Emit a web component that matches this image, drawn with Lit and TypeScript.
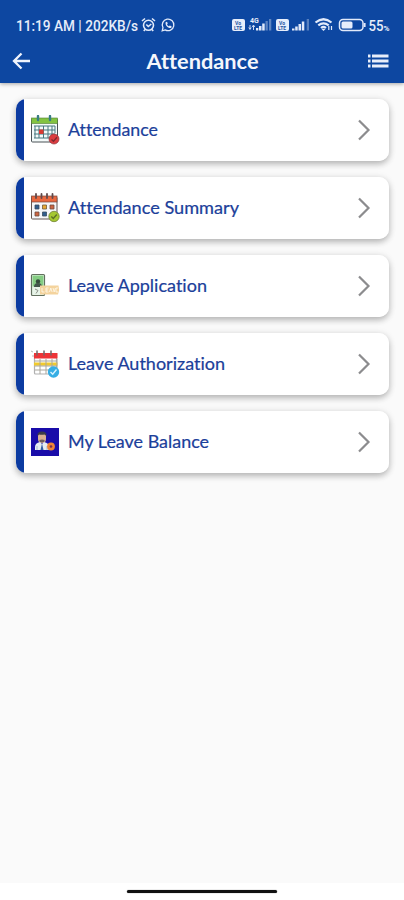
import { LitElement, html, svg, css } from "lit";
import { customElement, property } from "lit/decorators.js";

const icons: Record<string, unknown> = {
  calendar: svg`
    <rect x="1.5" y="4" width="26" height="23" rx="1" fill="#f4fafa" stroke="#4b5257" stroke-width="1"/>
    <rect x="1.5" y="3" width="26" height="5.5" fill="#83c341" stroke="#4f7d33" stroke-width=".6"/>
    <path d="M8 1v4M20 1v4" stroke="#397d83" stroke-width="2.4" stroke-linecap="round"/>
    <path d="M4 11h21M4 15h21M4 19h21M4 23h16M5 11v12M9 11v12M13.500 11v12M18 11v12M22 11v9M25 11v7" stroke="#47777e" stroke-width="1"/>
    <rect x="9" y="14.500" width="4.500" height="4.500" fill="#d93a32"/>
    <circle cx="24" cy="24" r="5" fill="#dc3c40" stroke="#8c343a" stroke-width=".7"/>
    <path d="M21.500 24.500l2 1.800 3.500-4" fill="none" stroke="#7d292e" stroke-width="1.300"/>`,
  summary: svg`
    <rect x="1.500" y="4" width="25.500" height="22" rx="1" fill="#f6f7f9" stroke="#655752" stroke-width="1"/>
    <rect x="1.500" y="3" width="25.500" height="6" fill="#e9683f" stroke="#74483c" stroke-width=".7"/>
    <path d="M6 1v4M11.500 1v4M17 1v4M22.500 1v4" stroke="#62494a" stroke-width="1.800" stroke-linecap="round"/>
    <path d="M5 12h4v4H5zM12.500 19h4v4h-4z" fill="#315e8d" stroke="#3b4d60" stroke-width=".8"/>
    <path d="M12.500 12h4v4h-4z" fill="#e8aa35" stroke="#6f5b3b" stroke-width=".8"/>
    <path d="M5 19h4v4H5zM20 12h4v4h-4z" fill="#cc6542" stroke="#704b40" stroke-width=".8"/>
    <circle cx="24" cy="23.500" r="5.200" fill="#a6c832" stroke="#748438" stroke-width=".8"/>
    <path d="M21.300 23.500l2 2 3.500-4" fill="none" stroke="#5d7028" stroke-width="1.400"/>`,
  application: svg`
    <rect x="1.500" y="3.500" width="13" height="21" rx="1" fill="#e7f4e8" stroke="#62705f" stroke-width="1.200"/>
    <rect x="2.500" y="4.500" width="11" height="11" fill="#85cd83"/>
    <circle cx="8" cy="10.500" r="2.200" fill="#344b3c"/>
    <path d="M4 16q0-4 4-4t4 4z" fill="#42564b"/>
    <path d="M5 18l3 1.500-2 3" fill="none" stroke="#8b9088" stroke-width="1"/>
    <path d="M10 14.500h18.500q1.500 4.500-.5 9H10z" fill="#f4d39d"/>
    <path d="M12 17v4h2.500M18.500 17H16v4h2.500M16 19h2M19.500 21l1.300-4 1.300 4M23 17l1.200 4 1.200-4M28 17h-2v4h2" fill="none" stroke="#fff7e7" stroke-width=".9"/>`,
  authorization: svg`
    <path d="M4.500 5v19q0 1 1 1h21V5" fill="#fff" stroke="#b1b1b1" stroke-width="1.200"/>
    <path d="M4 4h23.500v5.500H4z" fill="#ed3437"/>
    <path d="M4 13.500h23.500v3.200H4z" fill="#f1ca2d"/>
    <path d="M10 10v15M16 10v15M22 10v10M27 10v9M5 12h22M5 17h22M5 21h15" stroke="#aaa79e" stroke-width="1"/>
    <path d="M7 1.500v5M14 1.500v5M21 1.500v5" stroke="#706868" stroke-width="1.500"/>
    <path d="M1 2l2 1M2 7h2" stroke="#b6b6b6"/>
    <circle cx="23.500" cy="23" r="5.700" fill="#36aee4"/>
    <path d="M20.500 23l2.200 2.200 3.800-4.700" fill="none" stroke="#d8f3ff" stroke-width="1.400"/>`,
  balance: svg`
    <rect x="1" y="1" width="28" height="28" fill="#190ca9"/>
    <path d="M8 9q0-3 4-3t4 3v3q0 4-4 4t-4-4z" fill="#d9b193"/>
    <path d="M7.500 9q-.5-4.500 4.500-4.500T16.500 9l-2-1.500q-3 .5-5.500 0z" fill="#3c3d4a"/>
    <path d="M9.500 13q2.500-1 5 0v1.500q-2.500 2-5 0z" fill="#6d5e5c"/>
    <path d="M5 23v-3q0-4 5-5l2 2 2-2q5 1 5 5v3z" fill="#e7edf2"/>
    <path d="M12 16.500l1.500 6.500h-3z" fill="#315ea5"/>
    <path d="M7 19v4M17 19v4" stroke="#98aec6" stroke-width=".8"/>
    <circle cx="21" cy="19.500" r="3.900" fill="#ef8437"/>
    <circle cx="21" cy="19.500" r="1.300" fill="#76315a"/>`,
};

@customElement("status-bar")
class StatusBar extends LitElement {
  static styles = css`
    :host { display: block; height: 39px; }
    svg { display: block; }
    text { font-family: Roboto, sans-serif; fill: #e7edfa; }
    .clock { font-size: 14.5px; font-weight: 500; }
    .tiny { font-size: 7px; font-weight: 700; }
    .sim { font-size: 5px; font-weight: 700; fill: #2855a2; }
  `;
  render() {
    return html`<svg width="404" height="39" viewBox="0 0 404 39" fill="none" stroke="#e2eafa">
      <g stroke="none">
        <text class="clock" x="16" y="30.500" textLength="122" lengthAdjust="spacingAndGlyphs">11:19 AM | 202KB/s</text>
      </g>
      <circle cx="148.500" cy="25.300" r="5" stroke-width="1.600"/>
      <path d="M142 21l3-2.500M155 21l-3-2.500M146.300 24.500l2 2 3-2.500M145 29.500l-1.200 1.500M152 29.500l1.200 1.500" stroke-width="1.600"/>
      <path d="M162.200 30.800l.8-3.100a5.800 5.800 0 1 1 2.200 2.200z" stroke-width="1.300"/>
      <path d="M165.600 22.300c-.5 3.500 2.400 6.300 5.600 5.700l.4-1.700-1.800-.9-1 .9q-1.300-.6-1.800-2l.8-.9-.8-1.600z" fill="#e2eafa" stroke="none"/>
      ${[232, 276].map((x) => svg`
        <rect x="${x}" y="19" width="13" height="12" rx="2" fill="#e7eefb" stroke="none"/>
        <text class="sim" x="${x + 3}" y="24.500" stroke="none">Vo</text>
        <text class="sim" x="${x + 2}" y="29.500" stroke="none">LTE</text>`)}
      <text class="tiny" x="250" y="23" stroke="none">4G</text>
      <path d="M250 25v4M248.800 27.500l1.200 2 1.200-2M253.500 30v-4M252.300 27l1.200-2 1.200 2" stroke-width=".9"/>
      <g stroke="none" fill="#e2eafa">
        <path d="M256 28h2.300v2.500H256zM259 26h2.500v4.500H259zM262.200 23.500h2.500v7h-2.500z"/>
        <path d="M265.500 21h2.300v9.500h-2.300zM269 19h2.300v11.500H269z" opacity=".38"/>
        <path d="M292 28.500h2.500v2H292zM295.200 26.500h2.500v4h-2.500zM298.500 24h2.500v6.500h-2.500zM301.800 21.500h2.500v9h-2.500z"/>
        <path d="M306.700 19h2.300v11.500h-2.300z" opacity=".35"/>
      </g>
      <path d="M315.500 22.500q8-6.500 16 0M318.300 25.400q5.200-4.200 10.400 0M321 28q2.500-2 5 0" stroke-width="2.200"/>
      <path d="M323.500 31l-2-2h4z" fill="#e2eafa" stroke="none"/>
      <path d="M328.800 26v4M331.500 30v-4" stroke-width="1.200"/>
      <rect x="339.500" y="19.500" width="23.500" height="11" rx="3.500" stroke-width="1.500"/>
      <rect x="341.500" y="21.500" width="11" height="7" rx="1.500" fill="#e7eefb" stroke="none"/>
      <path d="M364.700 23v4" stroke-width="1.800"/>
      <g stroke="none">
        <text class="clock" x="368.500" y="30.500" textLength="15" lengthAdjust="spacingAndGlyphs">55</text>
        <text class="tiny" x="383.500" y="30.500" textLength="6" lengthAdjust="spacingAndGlyphs">%</text>
      </g>
    </svg>`;
  }
}

@customElement("menu-card")
class MenuCard extends LitElement {
  @property() label = "";
  @property() icon = "";
  @property({ type: Number }) labelWidth = 100;
  static styles = css`
    :host {
      display: flex; align-items: center; box-sizing: border-box; height: 62px;
      padding: 0 17px 0 14px; border-radius: 10px;
      background: linear-gradient(to right, #0c3ba1 8px, #fff 8px);
      box-shadow: 0 3px 6px rgba(0,0,0,.24), 0 1px 8px rgba(0,0,0,.09);
    }
    .icon { width: 30px; height: 30px; flex: none; }
    .label { flex: 1; min-width: 0; height: 30px; margin-left: 8px; overflow: visible; }
    text { font: 400 16.5px Lato, "Open Sans", sans-serif; font-variant-ligatures: none; fill: #1c409a; stroke: #1c409a; stroke-width: .2px; }
    .arrow { width: 16px; height: 24px; flex: none; }
  `;
  render() {
    return html`
      <svg class="icon" viewBox="0 0 30 30">${icons[this.icon]}</svg>
      <svg class="label"><text x="0" y="20.500" textLength="${this.labelWidth}" lengthAdjust="spacingAndGlyphs">${this.label}</text></svg>
      <svg class="arrow" viewBox="0 0 16 24"><path d="M3 2.500l9.500 9.500L3 21.500" fill="none" stroke="#8c8c8e" stroke-width="2.200"/></svg>`;
  }
}

@customElement("app-root")
class AppRoot extends LitElement {
  static styles = css`
    :host { display: flex; flex-direction: column; height: 900px; background: #fafafa; }
    header { height: 83px; background: #0d47a1; box-shadow: 0 1px 4px rgba(0,0,0,.35); }
    .bar { display: grid; grid-template-columns: 40px 1fr 40px; align-items: center; height: 44px; }
    .bar svg { display: block; width: 100%; height: 44px; }
    .title { font: 700 21.5px Lato, sans-serif; font-variant-ligatures: none; fill: #f5f7fc; }
    main { flex: 1; display: flex; flex-direction: column; gap: 16px; padding: 16px 15px 0 16px; }
    footer { height: 17px; background: #fff; display: flex; justify-content: center; align-items: center; }
    .handle { width: 150px; height: 3px; border-radius: 2px; background: #111; box-shadow: 0 0 1px #555; }
  `;
  private items = [
    { label: "Attendance", icon: "calendar", width: 90 },
    { label: "Attendance Summary", icon: "summary", width: 171 },
    { label: "Leave Application", icon: "application", width: 139 },
    { label: "Leave Authorization", icon: "authorization", width: 157 },
    { label: "My Leave Balance", icon: "balance", width: 141 },
  ];
  render() {
    return html`
      <header>
        <status-bar></status-bar>
        <div class="bar">
          <svg viewBox="0 0 40 44"><path d="M30 22H14M21.500 14.500L14 22l7.500 7.500" fill="none" stroke="#f0f4fc" stroke-width="2.300"/></svg>
          <svg><text class="title" x="106.500" y="29.500" textLength="112" lengthAdjust="spacingAndGlyphs">Attendance</text></svg>
          <svg viewBox="0 0 40 44"><path d="M4 17h2.500M8 17h16.500M4 22h2.500M8 22h16.500M4 27h2.500M8 27h16.500" stroke="#e8eefa" stroke-width="2.800"/></svg>
        </div>
      </header>
      <main>
        ${this.items.map((i) => html`<menu-card .label=${i.label} .icon=${i.icon} .labelWidth=${i.width}></menu-card>`)}
      </main>
      <footer><div class="handle"></div></footer>`;
  }
}
